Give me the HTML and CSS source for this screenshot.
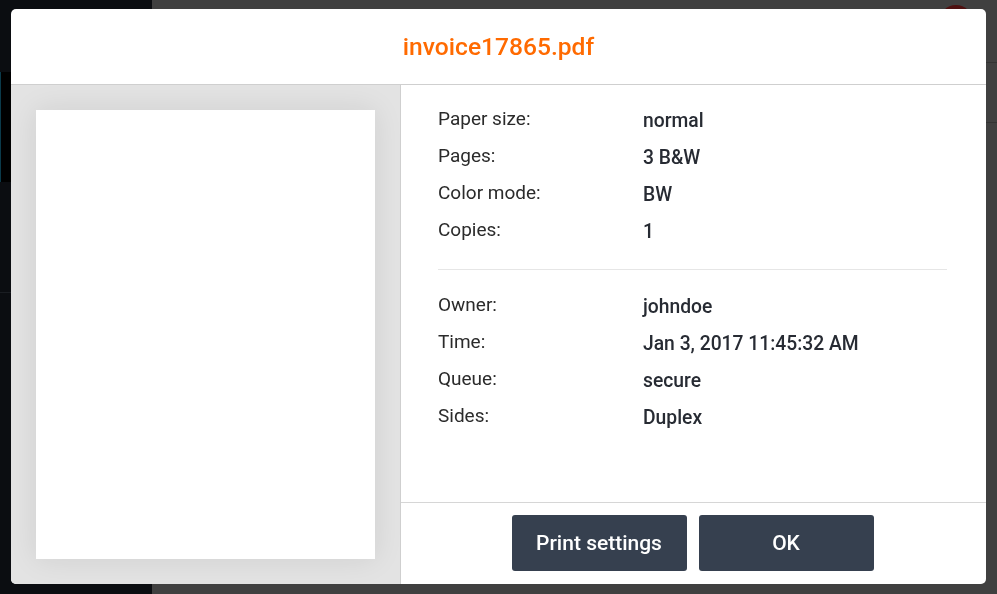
FILE: index.html
```html
<!DOCTYPE html>
<html lang="en">
<head>
  <meta charset="UTF-8" />
  <title>Print job</title>
  <link rel="stylesheet" href="styles.css">
</head>
<body>

  <div class="app">
    <aside class="sidebar">
      <div class="sidebar-tab"></div>
      <div class="sidebar-sep"></div>
    </aside>
    <main class="content">
      <div class="topbar"><span class="avatar"></span></div>
      <div class="content-row"></div>
      <div class="content-rest"></div>
    </main>
  </div>

  <div class="overlay">
    <div class="dialog">
      <header class="dialog-header">
        <h1>invoice17865.pdf</h1>
      </header>

      <div class="dialog-body">
        <div class="preview">
          <div class="paper"></div>
        </div>

        <div class="info">
          <div class="details">
            <div class="group">
              <div class="row"><span class="label">Paper size:</span><span class="value">normal</span></div>
              <div class="row"><span class="label">Pages:</span><span class="value">3 B&amp;W</span></div>
              <div class="row"><span class="label">Color mode:</span><span class="value">BW</span></div>
              <div class="row"><span class="label">Copies:</span><span class="value">1</span></div>
            </div>
            <hr class="divider">
            <div class="group">
              <div class="row"><span class="label">Owner:</span><span class="value">johndoe</span></div>
              <div class="row"><span class="label">Time:</span><span class="value">Jan 3, 2017 11:45:32 AM</span></div>
              <div class="row"><span class="label">Queue:</span><span class="value">secure</span></div>
              <div class="row"><span class="label">Sides:</span><span class="value">Duplex</span></div>
            </div>
          </div>

          <footer class="dialog-footer">
            <button>Print settings</button>
            <button>OK</button>
          </footer>
        </div>
      </div>
    </div>
  </div>

</body>
</html>
```

FILE: styles.css
```css
/* --- PAGE BEHIND THE DIALOG --- */
body {
  margin: 0;
  width: 997px;
  height: 594px;
  overflow: hidden;
  font-family: Roboto, "Liberation Sans", Arial, sans-serif;
  background-color: #404040;
}
.app { display: flex; height: 594px; }
.sidebar {
  width: 152px;
  background-color: #0b0d11;
  padding-top: 72px;
  box-sizing: border-box;
}
.sidebar-tab {
  width: 11px; height: 110px;
  background-color: #000;
  border-left: 1px solid #0b3a4a;
  box-sizing: border-box;
}
.sidebar-sep { height: 1px; margin-top: 110px; background-color: #1a1d22; }
.content { flex: 1; display: flex; flex-direction: column; }
.topbar {
  height: 62px;
  border-bottom: 1px solid #333;
  position: relative;
}
.avatar {
  position: absolute; left: 787px; top: 5px;
  width: 34px; height: 34px; border-radius: 50%;
  background-color: #4e1010;
}
.content-row { height: 59px; border-bottom: 1px solid #333; }
.content-rest { flex: 1; }

/* --- DIALOG --- */
.overlay {
  position: fixed; top: 0; left: 0; right: 0; bottom: 0;
  padding: 9px 11px 10px 11px;
  display: flex;
}
.dialog {
  flex: 1;
  display: flex;
  flex-direction: column;
  background-color: #fff;
  border-radius: 5px;
  overflow: hidden;
}
.dialog-header {
  height: 75px;
  border-bottom: 1px solid #cfcfcf;
  display: flex;
  align-items: center;
  justify-content: center;
}
.dialog-header h1 {
  margin: 0;
  font-size: 24.6px;
  font-weight: 500;
  color: #ff6a00;
}
.dialog-body { flex: 1; display: flex; }

.preview {
  width: 339px;
  background-color: #e3e3e3;
  border-right: 1px solid #cfcfcf;
  padding: 25px;
  display: flex;
}
.paper {
  flex: 1;
  background-color: #fff;
  box-shadow: 0 0 28px rgba(0, 0, 0, 0.09);
}

.info { flex: 1; display: flex; flex-direction: column; }
.details { flex: 1; padding: 15px 39px 0 37px; }
.row { display: flex; height: 37px; align-items: center; font-size: 19px; }
.label { width: 205px; color: #2b2b2b; }
.value { color: #272b33; font-weight: 500; padding-top: 4px; font-size: 19.3px; }
.divider {
  border: none;
  border-top: 1px solid #e6e6e6;
  margin: 21px 0 16px 0;
}

.dialog-footer {
  height: 82px;
  border-top: 1px solid #d6d6d6;
  display: flex;
  align-items: flex-start;
  justify-content: center;
  gap: 12px;
  padding: 12px 2px 0 0;
  box-sizing: border-box;
}
button {
  width: 175px; height: 56px;
  background-color: #36404f;
  color: #fff;
  border: none; border-radius: 3px;
  font-family: inherit; font-size: 21px; font-weight: 500;
  cursor: pointer;
}
```
